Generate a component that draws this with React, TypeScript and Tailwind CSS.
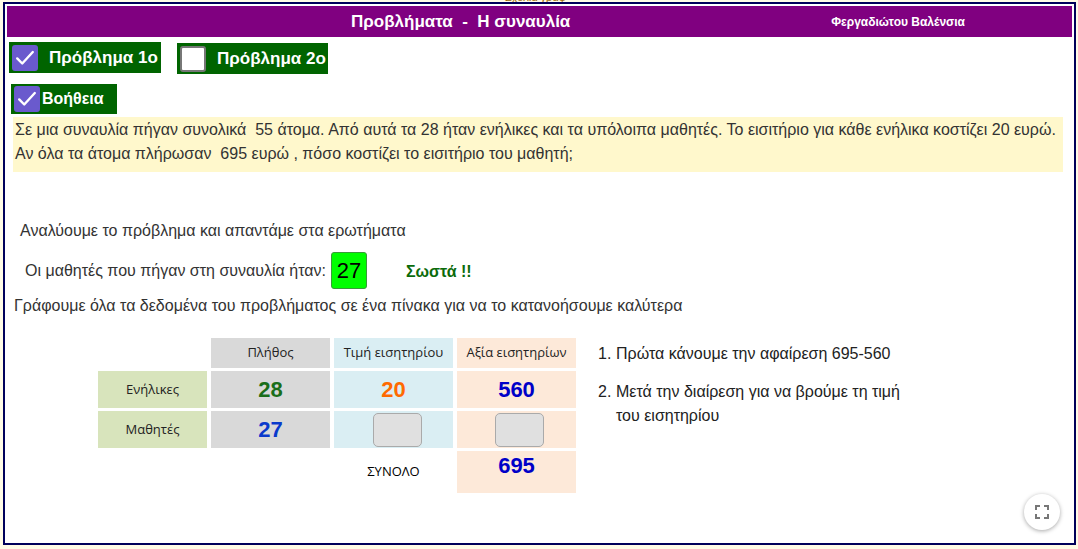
import React from "react";

function Check() {
  return (
    <svg viewBox="0 0 24 24" className="w-[22px] h-[22px]" fill="none" stroke="white" strokeWidth="2.6" strokeLinecap="round" strokeLinejoin="round">
      <polyline points="3.5,12.5 9,18 20.5,5.5" />
    </svg>
  );
}

function Box({ checked }: { checked: boolean }) {
  return checked ? (
    <div className="w-[26px] h-[26px] rounded-[3px] bg-[#6a5acd] flex items-center justify-center shrink-0">
      <Check />
    </div>
  ) : (
    <div className="w-[26px] h-[26px] rounded-[3px] bg-white border-2 border-[#777] shrink-0" />
  );
}

const num = "font-['Liberation_Sans',Arial,sans-serif] font-bold text-[22px]";

export default function App() {
  return (
    <div className="w-[1078px] h-[549px] bg-[#fffbe6] relative overflow-hidden font-['Liberation_Sans',Arial,sans-serif]">
      <div className="absolute top-[-9px] left-[505px] text-[11px] leading-[12px] text-[#996600] underline decoration-[#0000ee] whitespace-pre">
        Σχόλια γράφ
      </div>
      <div className="ml-[3px] mt-[2px] w-[1073px] h-[543px] border-2 border-[#00005a] bg-white p-[2px] relative flex flex-col">
        <div className="h-[31px] bg-[#800080] flex items-center shrink-0 text-white font-bold">
          <span className="ml-[344px] text-[17px] whitespace-pre">Προβλήματα  -  Η συναυλία</span>
          <span className="ml-auto mr-[107px] text-[12px]">Φεργαδιώτου Βαλένσια</span>
        </div>

        <div className="flex items-start mt-[5px] ml-[2px] gap-[16px]">
          <div className="h-[31px] w-[152px] bg-[#006400] flex items-center pl-[3px]">
            <Box checked />
            <span className="ml-[11px] text-white font-bold text-[17px]">Πρόβλημα 1ο</span>
          </div>
          <div className="h-[31px] w-[151px] bg-[#006400] flex items-center pl-[3px] mt-[1px]">
            <Box checked={false} />
            <span className="ml-[11px] text-white font-bold text-[17px]">Πρόβλημα 2ο</span>
          </div>
        </div>

        <div className="mt-[10px] ml-[4px] h-[30px] w-[106px] bg-[#006400] flex items-center pl-[3px]">
          <Box checked />
          <span className="ml-[2px] text-white font-bold text-[16px]">Βοήθεια</span>
        </div>

        <div className="mt-[3px] ml-[6px] mr-[9px] h-[55px] bg-[#fff8cc] pl-[2px] pt-[1px] text-[16px] leading-[24px] text-[#333]">
          <div className="whitespace-pre">Σε μια συναυλία πήγαν συνολικά  55 άτομα. Από αυτά τα 28 ήταν ενήλικες και τα υπόλοιπα μαθητές. Το εισιτήριο για κάθε ενήλικα κοστίζει 20 ευρώ.</div>
          <div className="whitespace-pre">Αν όλα τα άτομα πλήρωσαν  695 ευρώ , πόσο κοστίζει το εισιτήριο του μαθητή;</div>
        </div>

        <div className="mt-[49px] ml-[13px] text-[16px] leading-[20px] text-[#333]">
          Αναλύουμε το πρόβλημα και απαντάμε στα ερωτήματα
        </div>

        <div className="mt-[11px] ml-[18px] flex items-center h-[37px] text-[16px] text-[#333]">
          <span>Οι μαθητές που πήγαν στη συναυλία ήταν:</span>
          <div className="ml-[5px] w-[36px] h-[37px] bg-[#00ff00] border border-[#3a9a3a] rounded-[3px] flex items-center justify-center text-[22px] text-black">
            27
          </div>
          <span className="ml-[39px] mt-[2px] font-bold text-[16px] text-[#0b6b0b]">Σωστά !!</span>
        </div>

        <div className="mt-[7px] ml-[7px] text-[16px] leading-[20px] text-[#333]">
          Γράφουμε όλα τα δεδομένα του προβλήματος σε ένα πίνακα για να το κατανοήσουμε καλύτερα
        </div>

        <div className="mt-[22px] ml-[91px] flex items-start">
          <div className="grid grid-cols-[109px_119px_119px_119px] grid-rows-[30px_37px_37px_42px] gap-x-[4px] gap-y-[3px] font-['Open_Sans',sans-serif] text-[13px] text-[#222]">
            <div />
            <div className="bg-[#d9d9d9] flex items-center justify-center">Πλήθος</div>
            <div className="bg-[#daeef3] flex items-center justify-center">Τιμή εισητηρίου</div>
            <div className="bg-[#fde9d9] flex items-center justify-center">Αξία εισητηρίων</div>

            <div className="bg-[#d8e4bc] flex items-center justify-center">Ενήλικες</div>
            <div className={`bg-[#d9d9d9] flex items-center justify-center ${num} text-[#1a6e1a]`}>28</div>
            <div className={`bg-[#daeef3] flex items-center justify-center ${num} text-[#ff6a00]`}>20</div>
            <div className={`bg-[#fde9d9] flex items-center justify-center ${num} text-[#0000c8]`}>560</div>

            <div className="bg-[#d8e4bc] flex items-center justify-center">Μαθητές</div>
            <div className={`bg-[#d9d9d9] flex items-center justify-center ${num} text-[#0a3acc]`}>27</div>
            <div className="bg-[#daeef3] flex items-center justify-center">
              <div className="ml-[8px] w-[49px] h-[34px] bg-[#e0e0e0] border border-[#aaa] rounded-[5px]" />
            </div>
            <div className="bg-[#fde9d9] flex items-center justify-center">
              <div className="ml-[5px] w-[49px] h-[34px] bg-[#e0e0e0] border border-[#aaa] rounded-[5px]" />
            </div>

            <div />
            <div />
            <div className="flex items-center justify-center text-[13px] text-black">ΣΥΝΟΛΟ</div>
            <div className={`bg-[#fde9d9] flex justify-center pt-[2px] leading-[25px] ${num} text-[#0000c8]`}>695</div>
          </div>

          <div className="ml-[22px] mt-[4px] text-[16px] leading-[24px] text-[#222]">
            <div className="flex">
              <span className="w-[18px]">1.</span>
              <span className="w-[300px]">Πρώτα κάνουμε την αφαίρεση 695-560</span>
            </div>
            <div className="flex mt-[14px]">
              <span className="w-[18px]">2.</span>
              <span className="w-[295px]">Μετά την διαίρεση για να βρούμε τη τιμή του εισητηρίου</span>
            </div>
          </div>
        </div>

        <div className="absolute right-[14px] bottom-[13px] w-[36px] h-[36px] rounded-full bg-white shadow-[0_1px_4px_rgba(0,0,0,0.35)] flex items-center justify-center">
          <svg viewBox="0 0 14 14" className="w-[14px] h-[14px]" fill="none" stroke="#777" strokeWidth="2">
            <polyline points="1,5 1,1 5,1" />
            <polyline points="9,1 13,1 13,5" />
            <polyline points="13,9 13,13 9,13" />
            <polyline points="5,13 1,13 1,9" />
          </svg>
        </div>
      </div>
    </div>
  );
}
